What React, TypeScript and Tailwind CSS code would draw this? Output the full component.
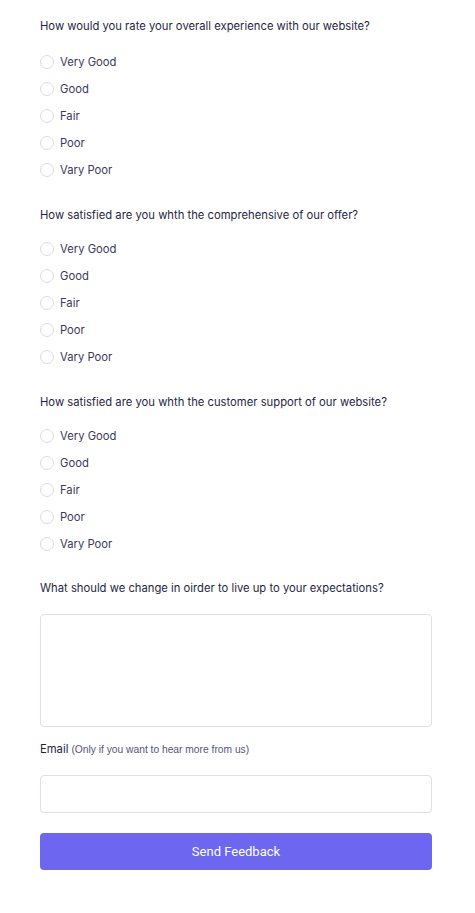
const options = ["Very Good", "Good", "Fair", "Poor", "Vary Poor"]

const questions = [
  "How would you rate your overall experience with our website?",
  "How satisfied are you whth the comprehensive of our offer?",
  "How satisfied are you whth the customer support of our website?",
]

function RadioGroup({ name, first }: { name: string; first: boolean }) {
  return (
    <ul className={first ? "mt-[14.5px] flex flex-col" : "mt-[12.5px] flex flex-col"}>
      {options.map((opt) => (
        <li key={opt} className="flex h-[27px] items-center gap-[6px]">
          <span className="h-[14px] w-[14px] rounded-full border border-[#d9dce6] bg-white" />
          <label className="text-[11.25px] leading-4 text-[#3a3a5a]" htmlFor={name + opt}>
            {opt}
          </label>
        </li>
      ))}
    </ul>
  )
}

export default function App() {
  return (
    <div className="min-h-screen bg-white font-['Inter',sans-serif]">
      <form className="ml-10 flex w-[392px] flex-col pt-[18px]">
        {questions.map((q, i) => (
          <div key={q} className={i > 0 ? "mt-[23.5px]" : ""}>
            <p className="text-[11.25px] leading-4 text-[#1f1f45]">{q}</p>
            <RadioGroup name={"q" + i} first={i === 0} />
          </div>
        ))}

        <p className="mt-[22.5px] text-[11.25px] leading-4 text-[#1f1f45]">
          What should we change in oirder to live up to your expectations?
        </p>
        <textarea className="mt-[18px] h-[113px] w-full resize-none rounded-[4px] border border-[#dde0ec] outline-none" />

        <p className="mt-[14px] flex items-baseline gap-[3px] text-[11.25px] leading-4 text-[#1f1f45]">
          <span>Email</span>
          <span className="font-['Liberation_Sans',sans-serif] text-[10.25px] leading-4 text-[#55557a]">
            (Only if you want to hear more from us)
          </span>
        </p>
        <input
          type="email"
          className="mt-[17px] h-[38px] w-full rounded-[4px] border border-[#dde0ec] outline-none"
        />

        <button
          type="button"
          className="mt-[20px] h-[37px] w-full rounded-[4px] bg-[#6c66f0] font-['Roboto',sans-serif] text-[13px] text-white"
        >
          Send Feedback
        </button>
      </form>
    </div>
  )
}
